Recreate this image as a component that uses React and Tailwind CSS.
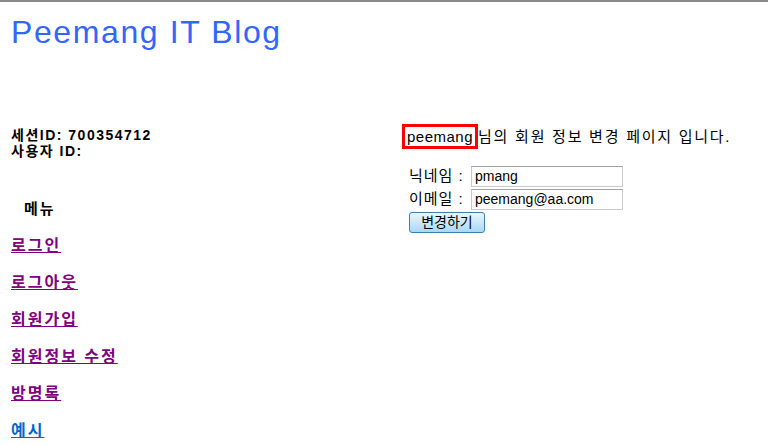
import React from 'react';

const menuItems = [
  { label: '로그인', visited: true },
  { label: '로그아웃', visited: true },
  { label: '회원가입', visited: true },
  { label: '회원정보 수정', visited: true },
  { label: '방명록', visited: true },
  { label: '예시', visited: false },
];

const font = { fontFamily: '"Liberation Sans", "Noto Sans CJK KR", sans-serif' };

export default function App() {
  return (
    <div className="h-[445px] overflow-hidden bg-white text-black border-t-2 border-[#8a8a8a]" style={font}>
      <h1 className="pl-[11px] pt-[10px] text-[32px] leading-[40px] tracking-[1.6px] text-[#3366ff] font-normal">
        Peemang IT Blog
      </h1>

      <div className="flex mt-[72px]">
        {/* Left: session + menu */}
        <div className="w-[392px] pl-[11px] pt-[3px]">
          <div className="text-[14px] font-bold leading-[16px] tracking-[1.5px]">
            <div>세션ID: 700354712</div>
            <div>사용자 ID:</div>
          </div>
          <div className="mt-[41px] pl-[13px] text-[15px] leading-[18px] font-bold tracking-[2px]">메뉴</div>
          <ul className="mt-[19px] flex flex-col gap-[19px]">
            {menuItems.map((item) => (
              <li key={item.label} className="leading-[18px]">
                <a
                  href="#"
                  className={`text-[16px] font-bold underline tracking-[2px] ${
                    item.visited ? 'text-[#800080]' : 'text-[#0066cc]'
                  }`}
                >
                  {item.label}
                </a>
              </li>
            ))}
          </ul>
        </div>

        {/* Right: edit form */}
        <div className="pl-[10px]">
          <div className="flex items-center text-[15px]">
            <span className="border-[3px] border-[#ff0000] px-[2px] leading-[19px] tracking-[0.5px]">peemang</span>
            <span className="leading-[19px] tracking-[1.75px]">님의 회원 정보 변경 페이지 입니다.</span>
          </div>
          <div className="mt-[16px] pl-[7px] text-[15px]">
            <div className="flex items-center gap-[4px] h-[23px]">
              <span className="w-[58px] tracking-[1px]">닉네임 :</span>
              <input
                defaultValue="pmang"
                className="w-[152px] h-[21px] border border-[#c8c8c8] border-t-[#a0a0a0] px-[3px] text-[14px] outline-none"
              />
            </div>
            <div className="flex items-center gap-[4px] h-[23px]">
              <span className="w-[58px] tracking-[1px]">이메일 :</span>
              <input
                defaultValue="peemang@aa.com"
                className="w-[152px] h-[21px] border border-[#c8c8c8] border-t-[#a0a0a0] px-[3px] text-[14px] outline-none"
              />
            </div>
            <button className="w-[76px] h-[21px] rounded-[3px] border border-[#3c7fb1] bg-gradient-to-b from-[#eaf6fd] to-[#a7d9f5] text-[14px] leading-[18px]">
              변경하기
            </button>
          </div>
        </div>
      </div>
    </div>
  );
}
